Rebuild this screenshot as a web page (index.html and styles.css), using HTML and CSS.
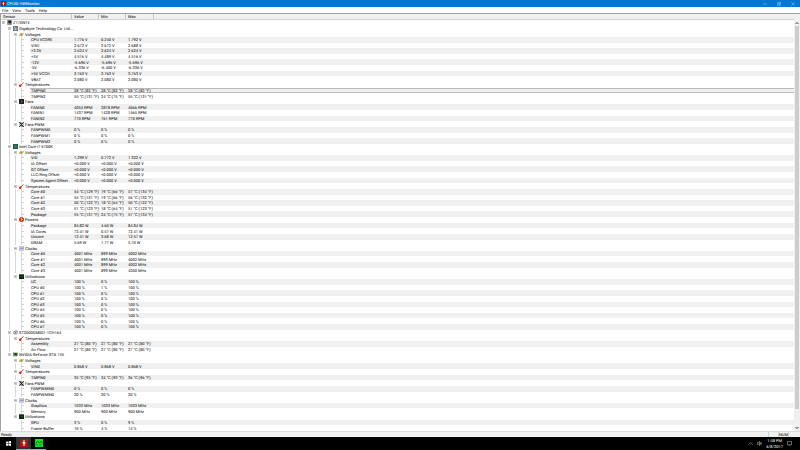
FILE: index.html
```html
<!DOCTYPE html>
<html lang="en">
<head>
    <meta charset="UTF-8">
    <meta name="viewport" content="width=device-width, initial-scale=1.0">
    <title>CPUID HWMonitor</title>
    <link rel="stylesheet" href="styles.css">
</head>
<body>
    <svg class="sprite" aria-hidden="true">
        <symbol id="board" viewBox="0 0 16 16">
            <rect x="1" y="1" width="14" height="14" fill="#555"/>
            <rect x="4" y="2" width="9" height="8" fill="#222"/>
            <path d="M1 12h14M3 1v14" stroke="#aaa" stroke-width="2"/>
        </symbol>
        <symbol id="maker" viewBox="0 0 16 16">
            <rect x="1" y="1" width="14" height="14" fill="#c9d6dc" stroke="#445" stroke-width="2"/>
            <path d="M4 12V7h4V4h4v8" stroke="#2f5a6e" stroke-width="2" fill="none"/>
        </symbol>
        <symbol id="volt" viewBox="0 0 16 16">
            <path d="M0 12L6 4h3L7 8l8-4-6 9H6l2-4z" fill="#d9a01c" stroke="#8a6a1c"/>
        </symbol>
        <symbol id="temp" viewBox="0 0 16 16">
            <path d="M14 1L6 10" stroke="#d33" stroke-width="3"/>
            <circle cx="4" cy="12" r="4" fill="#d11"/>
        </symbol>
        <symbol id="fan" viewBox="0 0 16 16">
            <rect width="16" height="16" fill="#222"/>
            <path d="M3 5l10 6M13 4L4 12M8 2v12" stroke="#555"/>
            <circle cx="8" cy="8" r="2" fill="#777"/>
        </symbol>
        <symbol id="pwm" viewBox="0 0 16 16">
            <rect width="16" height="16" fill="#c4c4c4"/>
            <path d="M1 1l14 14M15 1L1 15M5 1l6 14" stroke="#222" stroke-width="3"/>
        </symbol>
        <symbol id="cpu" viewBox="0 0 16 16">
            <rect width="16" height="16" fill="#1d5c48"/>
            <rect x="4" y="4" width="8" height="8" fill="#4f7a6c"/>
        </symbol>
        <symbol id="power" viewBox="0 0 16 16">
            <circle cx="8" cy="8" r="8" fill="#c22a10"/>
            <path d="M10 0L3 7h5l-3 8 9-9H9z" fill="#ffc83a"/>
        </symbol>
        <symbol id="clock" viewBox="0 0 16 16">
            <rect x="1" y="1" width="14" height="14" fill="#e6e6f2" stroke="#b4b4c4" stroke-width="2"/>
            <path d="M3 11l3-6 3 6 3-6 1 4" fill="none" stroke="#66c" stroke-width="2"/>
        </symbol>
        <symbol id="usage" viewBox="0 0 16 16">
            <rect width="16" height="15" y="1" fill="#0b2a12"/>
            <path d="M2 11l4-4 3 3 5-5" fill="none" stroke="#1c6a2c" stroke-width="2"/>
        </symbol>
        <symbol id="disk" viewBox="0 0 16 16">
            <path d="M1 8l5-5h7l2 5-4 5H4z" fill="#ddd" stroke="#555" stroke-width="2"/>
            <circle cx="8" cy="8" r="2" fill="#666"/>
        </symbol>
        <symbol id="gpu" viewBox="0 0 16 16">
            <rect x="1" y="2" width="14" height="10" fill="#3f8a3a"/>
            <rect x="6" y="4" width="6" height="6" fill="#1d3320"/>
            <path d="M1 1v14M4 13h9" stroke="#666" stroke-width="2"/>
        </symbol>
        <symbol id="bolt" viewBox="0 0 16 16">
            <rect width="16" height="16" fill="#b90d12"/>
            <path d="M7 2v4L4 7l3 3v4h2v-4l3-2-3-2V2z" fill="#fff"/>
        </symbol>
    </svg>

    <header class="title-bar">
        <svg class="icon"><use href="#bolt"/></svg>
        <h1>CPUID HWMonitor</h1>
        <div class="window-buttons">
            <button aria-label="Minimize"><svg viewBox="0 0 12 12"><path d="M1 6h10"/></svg></button>
            <button aria-label="Restore"><svg viewBox="0 0 12 12"><path d="M1 4h7v7H1zM4 4V1h7v7H8"/></svg></button>
            <button aria-label="Close"><svg viewBox="0 0 12 12"><path d="M1 1l10 10M11 1L1 11"/></svg></button>
        </div>
    </header>

    <nav class="menu-bar">
        <button>File</button>
        <button>View</button>
        <button>Tools</button>
        <button>Help</button>
    </nav>

    <main class="monitor">
        <table class="sensors">
            <thead>
                <tr>
                    <th scope="col">Sensor</th>
                    <th scope="col">Value</th>
                    <th scope="col">Min</th>
                    <th scope="col">Max</th>
                </tr>
            </thead>
            <tbody id="sensor-rows"></tbody>
        </table>
        <div class="scrollbar">
            <button aria-label="Scroll up"><svg viewBox="0 0 8 8"><path d="M1 6l3-3 3 3"/></svg></button>
            <div class="track"><div class="thumb"></div></div>
            <button aria-label="Scroll down"><svg viewBox="0 0 8 8"><path d="M1 2l3 3 3-3"/></svg></button>
        </div>
    </main>

    <div class="status-bar">
        <span class="status-text">Ready</span>
        <span class="pane"></span>
        <span class="pane">NUM</span>
        <span class="pane"></span>
    </div>

    <footer class="taskbar">
        <button class="start" aria-label="Start">
            <svg viewBox="0 0 12 12"><path fill="#fff" d="M0 2l5-1v5H0zM6 1l6-1v6H6zM0 7h5v5l-5-1zM6 7h6v5l-6-1z"/></svg>
        </button>
        <button class="task active" aria-label="HWMonitor"><svg><use href="#bolt"/></svg></button>
        <button class="task" aria-label="Stress test">
            <svg viewBox="0 0 16 16"><rect width="16" height="16" fill="#08e620"/><path d="M1 10l4-6 4 4 3-4 3 5M1 12h4M8 12h5" fill="none" stroke="#0a8a1c" stroke-width="2"/></svg>
        </button>
        <div class="tray">
            <svg class="tray-icon" viewBox="0 0 12 12"><path d="M1 9l5-5 5 5"/></svg>
            <svg class="tray-icon" viewBox="0 0 12 12"><path d="M1 4h2l3-3v10L3 8H1zM8 4v4M10 2v8"/></svg>
            <div class="clock">
                <span>1:58 PM</span>
                <span>6/8/2017</span>
            </div>
            <svg class="tray-icon" viewBox="0 0 12 12"><path d="M1 1h10v8H8l-2 2V9H1z"/></svg>
        </div>
    </footer>

    <script src="script.js"></script>
</body>
</html>
```
FILE: styles.css
```css
* {
    box-sizing: border-box;
}
body {
    margin: 0;
    min-height: 100vh;
    display: flex;
    flex-direction: column;
    background: #fff;
    color: #000;
    font-family: Roboto, "Liberation Sans", sans-serif;
    font-size: 4px;
    line-height: 5px;
    text-rendering: geometricPrecision;
}
button {
    display: flex;
    align-items: center;
    justify-content: center;
    margin: 0;
    padding: 0;
    border: none;
    background: none;
    color: inherit;
    font: inherit;
    text-rendering: inherit;
}
.sprite {
    position: absolute;
    width: 0;
    height: 0;
}
.icon {
    width: 5px;
    height: 5px;
    flex: none;
}

/* title and menu */
.title-bar {
    display: flex;
    align-items: center;
    gap: 1px;
    height: 7px;
    padding-left: 1px;
    background: #0078d7;
    color: #fff;
}
.title-bar h1 {
    margin: 0;
    font-size: 4px;
    font-weight: normal;
}
.window-buttons {
    display: flex;
    margin-left: auto;
}
.window-buttons button {
    width: 14px;
    height: 7px;
}
.window-buttons svg {
    width: 4px;
    height: 4px;
    fill: none;
    stroke: #fff;
    stroke-width: 1;
}
.menu-bar {
    display: flex;
    gap: 4px;
    height: 6px;
    padding-left: 2px;
}

/* sensor tree */
.monitor {
    flex: 1;
    display: flex;
    border-top: 1px solid #a0a0a0;
    border-left: 1px solid #a0a0a0;
}
.sensors {
    flex: 1;
    display: flex;
    flex-direction: column;
}
.sensors tr {
    display: grid;
    grid-template-columns: 71px 27px 27px 28px 1fr;
}
.sensors th,
.sensors td {
    padding: 0 0 0 2px;
    font-weight: normal;
    text-align: left;
    white-space: nowrap;
}
.sensors thead tr {
    height: 6px;
    background: #f0f0f0;
    border-bottom: 1px solid #d4d4d4;
}
.sensors thead th {
    border-right: 1px solid #c4c4c4;
}
.sensors tbody {
    flex: 1;
    display: grid;
    grid-auto-rows: 1fr;
}
.sensors tbody th {
    display: flex;
    padding: 0;
}
.sensors tbody td {
    display: flex;
    align-items: center;
}
.sensors tbody td:last-child {
    grid-column: span 2;
}
.sensors .icon {
    align-self: center;
}
.guide {
    flex: none;
    width: 6px;
    display: flex;
    align-items: center;
}
.guide.line {
    background: linear-gradient(#d8d8d8, #d8d8d8) 2px 0 / 1px 100% no-repeat;
}
.guide.leaf::after {
    content: "";
    width: 3px;
    height: 1px;
    margin-left: 2px;
    background: #d0d0d0;
}
.toggle {
    width: 3px;
    height: 3px;
    margin-left: 1px;
    background: #a8a8a8;
    border: 1px solid #c8c8c8;
}
.label {
    flex: 1;
    display: flex;
    align-items: center;
    padding-left: 1px;
}
.shaded .label,
.shaded td {
    background: #f0f0f0;
}
.selected .label,
.selected td {
    box-shadow: inset 0 1px #bbb, inset 0 -1px #bbb;
}

/* scrollbar */
.scrollbar {
    display: flex;
    flex-direction: column;
    width: 6px;
    padding-top: 6px;
    background: #f0f0f0;
}
.scrollbar button {
    height: 6px;
}
.scrollbar svg {
    width: 4px;
    height: 4px;
    fill: none;
    stroke: #444;
    stroke-width: 2;
}
.track {
    flex: 1;
}
.thumb {
    height: 96%;
    margin: 0 1px;
    background: #cdcdcd;
}

/* status bar */
.status-bar {
    display: flex;
    height: 6px;
    padding: 0 2px 0 1px;
    background: #f0f0f0;
    border-top: 1px solid #dcdcdc;
}
.status-text {
    flex: 1;
}
.pane {
    width: 10px;
    border-left: 1px solid #d0d0d0;
    text-align: center;
}

/* taskbar */
.taskbar {
    display: flex;
    height: 13px;
    background: #000;
    color: #fff;
}
.start {
    width: 16px;
}
.start svg {
    width: 5px;
    height: 5px;
}
.task {
    width: 15px;
    border-bottom: 1px solid #76b9ed;
}
.task.active {
    background: #333;
}
.task svg {
    width: 8px;
    height: 8px;
}
.tray {
    display: flex;
    align-items: center;
    gap: 4px;
    margin-left: auto;
    padding-right: 8px;
}
.tray-icon {
    width: 5px;
    height: 5px;
    fill: none;
    stroke: #fff;
}
.clock {
    display: flex;
    flex-direction: column;
    align-items: center;
    line-height: 6px;
}
```
FILE: script.js
```js
// each node: [icon, name, children]; each reading: [name, value, min, max]
const tree = ['board', 'Z170NT4', [
    ['maker', 'Gigabyte Technology Co. Ltd....', [
        ['volt', 'Voltages', [
            ['CPU VCORE', '1.776 V', '0.240 V', '1.792 V'],
            ['VIN1', '2.672 V', '2.672 V', '2.688 V'],
            ['+3.3V', '2.624 V', '2.624 V', '2.624 V'],
            ['+5V', '4.516 V', '4.489 V', '4.516 V'],
            ['-12V', '-5.696 V', '-5.696 V', '-5.696 V'],
            ['-5V', '-6.336 V', '-6.400 V', '-6.336 V'],
            ['+5V VCCH', '3.763 V', '3.763 V', '3.763 V'],
            ['VBAT', '2.080 V', '2.080 V', '2.080 V']
        ]],
        ['temp', 'Temperatures', [
            ['TMPIN0', '28 °C (82 °F)', '28 °C (82 °F)', '28 °C (82 °F)'],
            ['TMPIN2', '55 °C (131 °F)', '24 °C (75 °F)', '55 °C (131 °F)']
        ]],
        ['fan', 'Fans', [
            ['FANIN0', '4054 RPM', '2878 RPM', '4066 RPM'],
            ['FANIN1', '1437 RPM', '1428 RPM', '1465 RPM'],
            ['FANIN2', '770 RPM', '761 RPM', '770 RPM']
        ]],
        ['pwm', 'Fans PWM', [
            ['FANPWM0', '0 %', '0 %', '0 %'],
            ['FANPWM1', '0 %', '0 %', '0 %'],
            ['FANPWM2', '0 %', '0 %', '0 %']
        ]]
    ]],
    ['cpu', 'Intel Core i7 6700K', [
        ['volt', 'Voltages', [
            ['VID', '1.299 V', '0.772 V', '1.322 V'],
            ['IA Offset', '+0.000 V', '+0.000 V', '+0.000 V'],
            ['GT Offset', '+0.000 V', '+0.000 V', '+0.000 V'],
            ['LLC/Ring Offset', '+0.000 V', '+0.000 V', '+0.000 V'],
            ['System Agent Offset', '+0.000 V', '+0.000 V', '+0.000 V']
        ]],
        ['temp', 'Temperatures', [
            ['Core #0', '54 °C (129 °F)', '19 °C (66 °F)', '57 °C (134 °F)'],
            ['Core #1', '55 °C (131 °F)', '19 °C (66 °F)', '56 °C (132 °F)'],
            ['Core #2', '50 °C (122 °F)', '18 °C (64 °F)', '50 °C (122 °F)'],
            ['Core #3', '51 °C (123 °F)', '18 °C (64 °F)', '51 °C (123 °F)'],
            ['Package', '55 °C (131 °F)', '24 °C (75 °F)', '57 °C (134 °F)']
        ]],
        ['power', 'Powers', [
            ['Package', '84.82 W', '4.60 W', '84.84 W'],
            ['IA Cores', '72.41 W', '0.57 W', '72.41 W'],
            ['Uncore', '12.41 W', '3.68 W', '12.57 W'],
            ['DRAM', '5.69 W', '1.77 W', '5.70 W']
        ]],
        ['clock', 'Clocks', [
            ['Core #0', '4001 MHz', '899 MHz', '4002 MHz'],
            ['Core #1', '4001 MHz', '899 MHz', '4002 MHz'],
            ['Core #2', '4001 MHz', '899 MHz', '4002 MHz'],
            ['Core #3', '4001 MHz', '899 MHz', '4200 MHz']
        ]],
        ['usage', 'Utilizations', [
            ['UC', '100 %', '0 %', '100 %'],
            ['CPU #0', '100 %', '1 %', '100 %'],
            ['CPU #1', '100 %', '0 %', '100 %'],
            ['CPU #2', '100 %', '0 %', '100 %'],
            ['CPU #3', '100 %', '0 %', '100 %'],
            ['CPU #4', '100 %', '0 %', '100 %'],
            ['CPU #5', '100 %', '0 %', '100 %'],
            ['CPU #6', '100 %', '0 %', '100 %'],
            ['CPU #7', '100 %', '0 %', '100 %']
        ]]
    ]],
    ['disk', 'ST2000DM001-1CH164', [
        ['temp', 'Temperatures', [
            ['Assembly', '27 °C (80 °F)', '27 °C (80 °F)', '27 °C (80 °F)'],
            ['Air Flow', '27 °C (80 °F)', '27 °C (80 °F)', '27 °C (80 °F)']
        ]]
    ]],
    ['gpu', 'NVIDIA GeForce GTX 745', [
        ['volt', 'Voltages', [
            ['VIN0', '0.868 V', '0.868 V', '0.868 V']
        ]],
        ['temp', 'Temperatures', [
            ['TMPIN0', '35 °C (95 °F)', '34 °C (93 °F)', '36 °C (96 °F)']
        ]],
        ['pwm', 'Fans PWM', [
            ['FANPWMIN0', '0 %', '0 %', '0 %'],
            ['FANPWMIN0', '20 %', '20 %', '20 %']
        ]],
        ['clock', 'Clocks', [
            ['Graphics', '1033 MHz', '1033 MHz', '1033 MHz'],
            ['Memory', '900 MHz', '900 MHz', '900 MHz']
        ]],
        ['usage', 'Utilizations', [
            ['GPU', '3 %', '0 %', '9 %'],
            ['Frame Buffer', '10 %', '4 %', '14 %']
        ]]
    ]]
]];

const rows = [];

function guides(lines) {
    return lines.map(on => `<span class="guide${on ? ' line' : ''}"></span>`).join('');
}

function addNode(node, lines, hasNext) {
    const [icon, name, children] = node;
    rows.push(`
        <tr>
            <th scope="row">${guides(lines)}<span class="guide"><span class="toggle"></span></span><svg class="icon"><use href="#${icon}"/></svg><span class="label">${name}</span></th>
            <td></td><td></td><td></td>
        </tr>`);
    children.forEach((child, i) => {
        const next = i < children.length - 1;
        if (Array.isArray(child[2])) {
            addNode(child, [...lines, hasNext], next);
        } else {
            addReading(child, [...lines, hasNext], i);
        }
    });
}

function addReading(reading, lines, i) {
    const [name, ...values] = reading;
    // the first TMPIN0 is the row under the cursor
    const selected = name === 'TMPIN0' && values[0].startsWith('28');
    const classes = (i % 2 === 0 ? 'shaded' : '') + (selected ? ' selected' : '');
    rows.push(`
        <tr class="${classes}">
            <th scope="row">${guides(lines)}<span class="guide line leaf"></span><span class="icon"></span><span class="label">${name}</span></th>
            ${values.map(v => `<td>${v}</td>`).join('')}
        </tr>`);
}

addNode(tree, [], false);
document.getElementById('sensor-rows').innerHTML = rows.join('');
```
